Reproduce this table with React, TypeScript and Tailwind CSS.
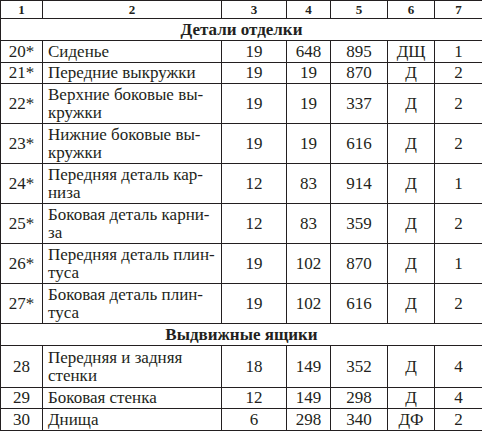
import React from "react";

type Row = {
  n: string;
  name: string[];
  a: string;
  b: string;
  c: string;
  mat: string;
  qty: string;
  h: string;
};

const finishing: Row[] = [
  { n: "20*", name: ["Сиденье"], a: "19", b: "648", c: "895", mat: "ДЩ", qty: "1", h: "h-[22px]" },
  { n: "21*", name: ["Передние выкружки"], a: "19", b: "19", c: "870", mat: "Д", qty: "2", h: "h-[21px]" },
  { n: "22*", name: ["Верхние боковые вы-", "кружки"], a: "19", b: "19", c: "337", mat: "Д", qty: "2", h: "h-[40px]" },
  { n: "23*", name: ["Нижние боковые вы-", "кружки"], a: "19", b: "19", c: "616", mat: "Д", qty: "2", h: "h-[40px]" },
  { n: "24*", name: ["Передняя деталь кар-", "низа"], a: "12", b: "83", c: "914", mat: "Д", qty: "1", h: "h-[40px]" },
  { n: "25*", name: ["Боковая деталь карни-", "за"], a: "12", b: "83", c: "359", mat: "Д", qty: "2", h: "h-[40px]" },
  { n: "26*", name: ["Передняя деталь плин-", "туса"], a: "19", b: "102", c: "870", mat: "Д", qty: "1", h: "h-[40px]" },
  { n: "27*", name: ["Боковая деталь плин-", "туса"], a: "19", b: "102", c: "616", mat: "Д", qty: "2", h: "h-[40px]" },
];

const drawers: Row[] = [
  { n: "28", name: ["Передняя и задняя", "стенки"], a: "18", b: "149", c: "352", mat: "Д", qty: "4", h: "h-[42px]" },
  { n: "29", name: ["Боковая стенка"], a: "12", b: "149", c: "298", mat: "Д", qty: "4", h: "h-[21px]" },
  { n: "30", name: ["Днища"], a: "6", b: "298", c: "340", mat: "ДФ", qty: "2", h: "h-[22px]" },
];

const cell = "border border-[#231f20] p-0 align-middle";

function DataRow({ row }: { row: Row }) {
  return (
    <tr className={row.h}>
      <td className={`${cell} text-center`}>{row.n}</td>
      <td className={`${cell} pl-[5px] text-left`}>
        {row.name.map((line, i) => (
          <div key={i}>{line}</div>
        ))}
      </td>
      <td className={`${cell} text-center`}>{row.a}</td>
      <td className={`${cell} text-center`}>{row.b}</td>
      <td className={`${cell} text-center`}>{row.c}</td>
      <td className={`${cell} text-center`}>{row.mat}</td>
      <td className={`${cell} text-center`}>{row.qty}</td>
    </tr>
  );
}

function Section({ title }: { title: string }) {
  return (
    <tr className="h-[22px]">
      <td colSpan={7} className={`${cell} text-center font-bold`}>
        {title}
      </td>
    </tr>
  );
}

export default function App() {
  return (
    <div className="h-[432px] w-[482px] bg-white">
      <table
        className="w-[482px] table-fixed border-collapse text-[17px] leading-[18px] text-[#231f20]"
        style={{ fontFamily: '"Liberation Serif", "DejaVu Serif", serif' }}
      >
        <colgroup>
          <col className="w-[42px]" />
          <col className="w-[179px]" />
          <col className="w-[65px]" />
          <col className="w-[44px]" />
          <col className="w-[57px]" />
          <col className="w-[47px]" />
          <col className="w-[48px]" />
        </colgroup>
        <tbody>
          <tr className="h-[18px] text-[13px] font-bold leading-[14px]">
            {["1", "2", "3", "4", "5", "6", "7"].map((h) => (
              <td key={h} className={`${cell} text-center`}>
                {h}
              </td>
            ))}
          </tr>
          <Section title="Детали отделки" />
          {finishing.map((r) => (
            <DataRow key={r.n} row={r} />
          ))}
          <Section title="Выдвижные ящики" />
          {drawers.map((r) => (
            <DataRow key={r.n} row={r} />
          ))}
        </tbody>
      </table>
    </div>
  );
}
